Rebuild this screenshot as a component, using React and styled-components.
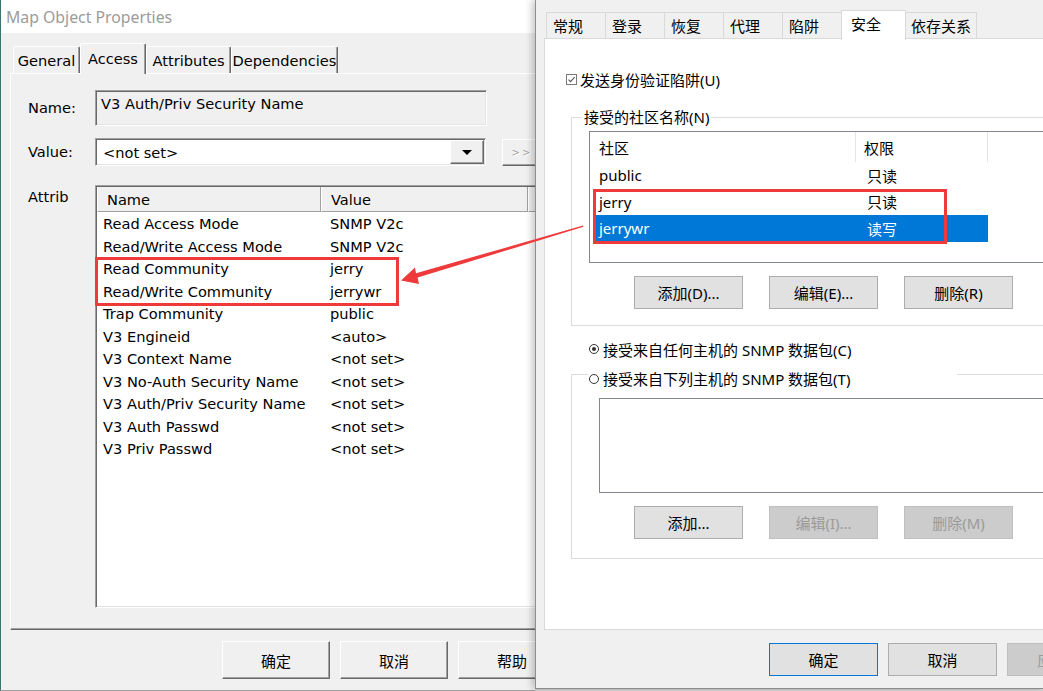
import React from "react";
import styled, { createGlobalStyle, css } from "styled-components";

const GlobalStyle = createGlobalStyle`
  html, body { margin: 0; padding: 0; }
  body { width: 1043px; height: 691px; overflow: hidden; background: #d4d4d4; }
  *, *::before, *::after { box-sizing: border-box; }
`;

const raised = css`
  border-style: solid;
  border-width: 1px;
  border-color: #ffffff #696969 #696969 #ffffff;
  box-shadow: inset -1px -1px 0 #a0a0a0;
`;

const sunken = css`
  border-style: solid;
  border-width: 1px;
  border-color: #a0a0a0 #ffffff #ffffff #a0a0a0;
  box-shadow: inset 1px 1px 0 #696969, inset -1px -1px 0 #e3e3e3;
`;

const Desktop = styled.div`
  position: relative;
  width: 1043px;
  height: 691px;
  display: flex;
  align-items: flex-start;
  overflow: hidden;
  background: #d4d4d4;
`;

/* ---------------- Left (classic) window ---------------- */

const LeftWindow = styled.section`
  flex: none;
  width: 535px;
  height: 691px;
  display: flex;
  flex-direction: column;
  background: #f0f0f0;
  border-left: 1px solid #3d746f;
  border-bottom: 1px solid #a0a0a0;
  overflow: hidden;
  font-family: "DejaVu Sans", "Noto Sans CJK SC", sans-serif;
  font-size: 14.6px;
  color: #000;
`;

const TitleBar = styled.div`
  flex: none;
  height: 33px;
  display: flex;
  align-items: center;
  padding-left: 5px;
  background: #ffffff;
  font-family: "Noto Sans", sans-serif;
  font-size: 15.8px;
  color: #9b9b9b;
`;

const LeftBody = styled.div`
  flex: 1;
  display: flex;
  flex-direction: column;
  padding: 10px 0 0 9px;
`;

const ClassicTabs = styled.div`
  flex: none;
  height: 30px;
  display: flex;
  align-items: flex-end;
  padding-left: 3px;
  position: relative;
  z-index: 1;
`;

const ClassicTab = styled.div`
  width: ${(p) => p.$w}px;
  height: ${(p) => (p.$active ? 31 : 27)}px;
  margin-bottom: ${(p) => (p.$active ? -1 : 0)}px;
  display: flex;
  align-items: center;
  justify-content: center;
  padding-bottom: ${(p) => (p.$active ? 2 : 0)}px;
  background: #f0f0f0;
  border-style: solid;
  border-width: 1px 1px 0 1px;
  border-color: #ffffff #696969 transparent #ffffff;
  box-shadow: inset -1px 0 0 #a0a0a0;
  border-radius: 2px 2px 0 0;
  white-space: nowrap;
`;

const ClassicPanel = styled.div`
  flex: none;
  width: 620px;
  height: 557px;
  display: flex;
  flex-direction: column;
  padding: 16px 0 0 17px;
  border-style: solid;
  border-width: 1px 0 1px 1px;
  border-color: #ffffff transparent #696969 #ffffff;
  box-shadow: inset 0 -1px 0 #a0a0a0;
`;

const FieldRow = styled.div`
  display: flex;
  align-items: ${(p) => (p.$top ? "flex-start" : "center")};
  margin-top: ${(p) => p.$gap || 0}px;
`;

const FieldLabel = styled.div`
  flex: none;
  width: 67px;
  padding-top: ${(p) => (p.$top ? 3 : 0)}px;
  line-height: 18px;
`;

const ReadonlyBox = styled.div`
  width: 392px;
  height: 36px;
  padding: 4px 5px;
  line-height: 18px;
  background: #f0f0f0;
  ${sunken};
`;

const Combo = styled.div`
  width: 391px;
  height: 28px;
  display: flex;
  align-items: center;
  padding: 1px 1px 1px 7px;
  background: #ffffff;
  ${sunken};
`;

const ComboText = styled.span`
  flex: 1;
`;

const DropButton = styled.div`
  width: 34px;
  height: 24px;
  display: flex;
  align-items: center;
  justify-content: center;
  background: #f0f0f0;
  ${raised};
  &::after {
    content: "";
    border-left: 5px solid transparent;
    border-right: 5px solid transparent;
    border-top: 5px solid #000;
  }
`;

const MoreButton = styled.div`
  width: 40px;
  height: 27px;
  margin-left: 16px;
  display: flex;
  align-items: center;
  justify-content: center;
  background: #f0f0f0;
  color: #a6a6a6;
  text-shadow: 1px 1px 0 #ffffff;
  font-size: 10px;
  letter-spacing: 2px;
  ${raised};
`;

const AttrList = styled.div`
  width: 470px;
  height: 423px;
  background: #ffffff;
  ${sunken};
  padding: 1px;
`;

const AttrHeader = styled.div`
  display: grid;
  grid-template-columns: 224px 207px 1fr;
  height: 25px;
`;

const HeadCell = styled.div`
  display: flex;
  align-items: center;
  padding-left: 9px;
  background: #f0f0f0;
  border-left: 1px solid #ffffff;
  border-right: 1px solid #a0a0a0;
  border-bottom: 1px solid #a0a0a0;
`;

const AttrRows = styled.div`
  padding-top: 1px;
`;

const AttrRow = styled.div`
  display: grid;
  grid-template-columns: 227px 1fr;
  height: 22.5px;
  line-height: 22.5px;
  padding-left: 6px;
  white-space: nowrap;
`;

const ClassicFooter = styled.div`
  display: flex;
  gap: 10px;
  padding: 11px 0 0 212px;
`;

const ClassicButton = styled.div`
  flex: none;
  width: 108px;
  height: 38px;
  display: flex;
  align-items: center;
  justify-content: center;
  background: #f0f0f0;
  font-family: "Noto Sans CJK SC", sans-serif;
  font-size: 15px;
  ${raised};
`;

/* ---------------- Right (modern) window ---------------- */

const RightWindow = styled.section`
  flex: 1;
  min-width: 0;
  height: 689px;
  position: relative;
  z-index: 2;
  display: flex;
  flex-direction: column;
  padding: 10px 0 0 8px;
  background: #f0f0f0;
  border-left: 1px solid #8f8f8f;
  border-bottom: 1px solid #8a8a8a;
  box-shadow: -3px 0 7px rgba(0, 0, 0, 0.22);
  overflow: hidden;
  font-family: "Noto Sans", "Noto Sans CJK SC", sans-serif;
  font-size: 15px;
  color: #000;
`;

const ModernTabs = styled.div`
  flex: none;
  height: 28px;
  display: flex;
  align-items: flex-end;
  padding-left: 2px;
  position: relative;
  z-index: 1;
`;

const ModernTab = styled.div`
  min-width: ${(p) => (p.$active ? 65 : 60)}px;
  height: ${(p) => (p.$active ? 30 : 26)}px;
  margin: 0 ${(p) => (p.$active ? -1 : 0)}px ${(p) => (p.$active ? -2 : 0)}px -1px;
  display: flex;
  align-items: center;
  padding: 0 5px ${(p) => (p.$active ? 4 : 0)}px ${(p) => (p.$active ? 9 : 6)}px;
  background: ${(p) => (p.$active ? "#ffffff" : "#f0f0f0")};
  border: 1px solid #d9d9d9;
  border-bottom: none;
  position: relative;
  z-index: ${(p) => (p.$active ? 2 : 1)};
  white-space: nowrap;
  &:first-child {
    margin-left: 0;
  }
`;

const ModernPanel = styled.div`
  flex: none;
  height: 592px;
  margin-right: -40px;
  display: flex;
  flex-direction: column;
  align-items: flex-start;
  padding: 30px 0 0 21px;
  background: #ffffff;
  border: 1px solid #d9d9d9;
`;

const OptionRow = styled.div`
  height: 20px;
  display: flex;
  align-items: center;
  gap: ${(p) => p.$gap || 3}px;
  margin-left: ${(p) => p.$indent || 0}px;
  margin-top: ${(p) => p.$top || 0}px;
  white-space: nowrap;
`;

const CheckBox = styled.span`
  width: 11px;
  height: 11px;
  border: 1px solid #7a7a7a;
  display: inline-flex;
  align-items: center;
  justify-content: center;
  background: #fff;
`;

const Radio = styled.span`
  width: 10px;
  height: 10px;
  border-radius: 50%;
  border: 1px solid #333;
  display: inline-flex;
  align-items: center;
  justify-content: center;
  &::after {
    content: "";
    width: 4px;
    height: 4px;
    border-radius: 50%;
    background: ${(p) => (p.$checked ? "#333" : "transparent")};
  }
`;

const GroupBox = styled.fieldset`
  align-self: stretch;
  margin: ${(p) => p.$top || 0}px 0 0 5px;
  padding: 0;
  min-width: 0;
  border: 1px solid #dcdcdc;
  border-right: none;
`;

const GroupLegend = styled.legend`
  margin-left: 10px;
  padding: 0 2px;
  line-height: 20px;
  white-space: nowrap;
`;

const RadioLegend = styled.legend`
  width: 369px;
  margin-left: 16px;
  padding: 10px 0 0 1px;
  line-height: 20px;
  display: flex;
  align-items: center;
  gap: 4px;
  white-space: nowrap;
`;

const GroupBody = styled.div`
  padding: ${(p) => p.$pt}px 0 ${(p) => p.$pb}px ${(p) => p.$pl}px;
  display: flex;
  flex-direction: column;
`;

const ListView = styled.div`
  width: 480px;
  height: ${(p) => p.$h}px;
  background: #ffffff;
  border: 1px solid #828790;
`;

const ListHeader = styled.div`
  display: grid;
  grid-template-columns: 266px 132px 1fr;
  height: 30px;
`;

const ListHeadCell = styled.div`
  display: flex;
  align-items: center;
  padding-left: ${(p) => p.$pl}px;
  border-right: 1px solid #e5e5e5;
`;

const ListItems = styled.div`
  padding-left: 6px;
`;

const ListItem = styled.div`
  width: 392px;
  height: 26.5px;
  display: grid;
  grid-template-columns: 268px 1fr;
  align-items: center;
  padding-left: 3px;
  background: ${(p) => (p.$selected ? "#0078d7" : "transparent")};
  color: ${(p) => (p.$selected ? "#ffffff" : "#000000")};
`;

const ButtonRow = styled.div`
  display: flex;
  gap: 26px;
  margin-top: 13px;
  padding-left: ${(p) => p.$pl}px;
`;

const WinButton = styled.div`
  flex: none;
  width: 109px;
  height: 33px;
  display: flex;
  align-items: center;
  justify-content: center;
  background: ${(p) => (p.$disabled ? "#cccccc" : "#e1e1e1")};
  border: 1px solid
    ${(p) => (p.$primary ? "#0078d7" : p.$disabled ? "#bfbfbf" : "#adadad")};
  color: ${(p) => (p.$disabled ? "#9a9a9a" : "#000")};
  white-space: nowrap;
`;

const ModernFooter = styled.div`
  display: flex;
  gap: 10px;
  padding: 13px 0 0 225px;
`;

/* ---------------- Annotation overlay ---------------- */

const Annotations = styled.div`
  position: absolute;
  inset: 0;
  pointer-events: none;
  z-index: 10;
`;

const RedFrame = styled.div`
  position: absolute;
  left: ${(p) => p.$x}px;
  top: ${(p) => p.$y}px;
  width: ${(p) => p.$w}px;
  height: ${(p) => p.$h}px;
  border: 3px solid #ee3a3a;
`;

const ArrowSvg = styled.svg`
  position: absolute;
  left: 0;
  top: 0;
`;

const attrRows = [
  ["Read Access Mode", "SNMP V2c"],
  ["Read/Write Access Mode", "SNMP V2c"],
  ["Read Community", "jerry"],
  ["Read/Write Community", "jerrywr"],
  ["Trap Community", "public"],
  ["V3 Engineid", "<auto>"],
  ["V3 Context Name", "<not set>"],
  ["V3 No-Auth Security Name", "<not set>"],
  ["V3 Auth/Priv Security Name", "<not set>"],
  ["V3 Auth Passwd", "<not set>"],
  ["V3 Priv Passwd", "<not set>"],
];

const leftTabs = [
  ["General", 67],
  ["Access", 66, true],
  ["Attributes", 85],
  ["Dependencies", 107],
];

const rightTabs = ["常规", "登录", "恢复", "代理", "陷阱", "安全", "依存关系"];

const communities = [
  ["public", "只读"],
  ["jerry", "只读"],
  ["jerrywr", "读写", true],
];

function CheckMark() {
  return (
    <svg width="9" height="9" viewBox="0 0 9 9">
      <path d="M1.5 4.6 L3.6 6.6 L7.6 2.2" fill="none" stroke="#555" strokeWidth="1.1" />
    </svg>
  );
}

export default function App() {
  return (
    <>
      <GlobalStyle />
      <Desktop>
        <LeftWindow>
          <TitleBar>Map Object Properties</TitleBar>
          <LeftBody>
            <ClassicTabs>
              {leftTabs.map(([t, w, a]) => (
                <ClassicTab key={t} $w={w} $active={a}>
                  {t}
                </ClassicTab>
              ))}
            </ClassicTabs>
            <ClassicPanel>
              <FieldRow>
                <FieldLabel>Name:</FieldLabel>
                <ReadonlyBox>V3 Auth/Priv Security Name</ReadonlyBox>
              </FieldRow>
              <FieldRow $gap={12}>
                <FieldLabel>Value:</FieldLabel>
                <Combo>
                  <ComboText>&lt;not set&gt;</ComboText>
                  <DropButton />
                </Combo>
                <MoreButton>&gt;&gt;</MoreButton>
              </FieldRow>
              <FieldRow $gap={19} $top>
                <FieldLabel $top>Attrib</FieldLabel>
                <AttrList>
                  <AttrHeader>
                    <HeadCell>Name</HeadCell>
                    <HeadCell>Value</HeadCell>
                    <HeadCell />
                  </AttrHeader>
                  <AttrRows>
                    {attrRows.map(([n, v]) => (
                      <AttrRow key={n}>
                        <span>{n}</span>
                        <span>{v}</span>
                      </AttrRow>
                    ))}
                  </AttrRows>
                </AttrList>
              </FieldRow>
            </ClassicPanel>
            <ClassicFooter>
              <ClassicButton>确定</ClassicButton>
              <ClassicButton>取消</ClassicButton>
              <ClassicButton>帮助</ClassicButton>
            </ClassicFooter>
          </LeftBody>
        </LeftWindow>

        <RightWindow>
          <ModernTabs>
            {rightTabs.map((t) => (
              <ModernTab key={t} $active={t === "安全"}>
                {t}
              </ModernTab>
            ))}
          </ModernTabs>
          <ModernPanel>
            <OptionRow>
              <CheckBox>
                <CheckMark />
              </CheckBox>
              发送身份验证陷阱(U)
            </OptionRow>

            <GroupBox $top={18}>
              <GroupLegend>接受的社区名称(N)</GroupLegend>
              <GroupBody $pt={4} $pb={16} $pl={17}>
                <ListView $h={132}>
                  <ListHeader>
                    <ListHeadCell $pl={9}>社区</ListHeadCell>
                    <ListHeadCell $pl={8}>权限</ListHeadCell>
                    <ListHeadCell $pl={8} />
                  </ListHeader>
                  <ListItems>
                    {communities.map(([c, r, s]) => (
                      <ListItem key={c} $selected={s}>
                        <span>{c}</span>
                        <span>{r}</span>
                      </ListItem>
                    ))}
                  </ListItems>
                </ListView>
                <ButtonRow $pl={45}>
                  <WinButton>添加(D)...</WinButton>
                  <WinButton>编辑(E)...</WinButton>
                  <WinButton>删除(R)</WinButton>
                </ButtonRow>
              </GroupBody>
            </GroupBox>

            <OptionRow $indent={23} $top={13} $gap={4}>
              <Radio $checked />
              接受来自任何主机的 SNMP 数据包(C)
            </OptionRow>

            <GroupBox>
              <RadioLegend>
                <Radio />
                接受来自下列主机的 SNMP 数据包(T)
              </RadioLegend>
              <GroupBody $pt={9} $pb={19} $pl={27}>
                <ListView $h={95} />
                <ButtonRow $pl={35}>
                  <WinButton>添加...</WinButton>
                  <WinButton $disabled>编辑(I)...</WinButton>
                  <WinButton $disabled>删除(M)</WinButton>
                </ButtonRow>
              </GroupBody>
            </GroupBox>
          </ModernPanel>
          <ModernFooter>
            <WinButton $primary>确定</WinButton>
            <WinButton>取消</WinButton>
            <WinButton $disabled>应用(A)</WinButton>
          </ModernFooter>
        </RightWindow>

        <Annotations>
          <RedFrame $x={95} $y={257} $w={304} $h={49} />
          <RedFrame $x={593} $y={189} $w={354} $h={55} />
          <ArrowSvg width="1043" height="691" viewBox="0 0 1043 691">
            <polygon
              points="401,280.5 415,267.5 416,273.2 583,225.6 583.4,226.8 417.6,277.6 419,284"
              fill="#ee3a3a"
            />
          </ArrowSvg>
        </Annotations>
      </Desktop>
    </>
  );
}
